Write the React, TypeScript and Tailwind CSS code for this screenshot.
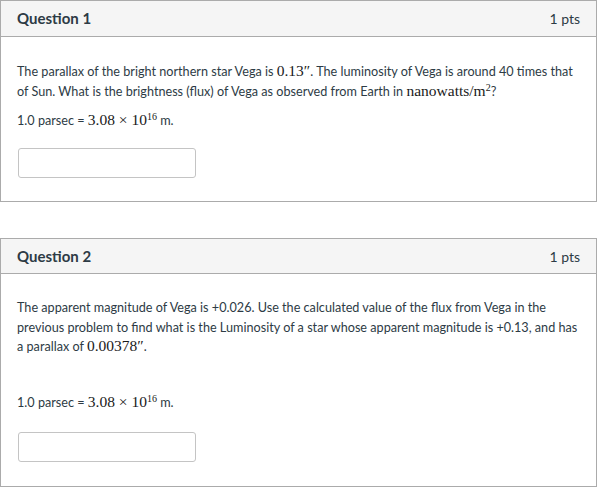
import React from "react";

const M = ({ children }: { children: React.ReactNode }) => (
  <span className="font-['Liberation_Serif',serif] text-[15.5px] leading-[0] text-[#1a1a1a]">{children}</span>
);

const Parsec = () => (
  <p className="text-[12.65px] leading-[20px] h-[20px]">
    1.0 parsec = <M>3.08 × 10<sup className="text-[10px]">16</sup></M> m.
  </p>
);

function Card({ title, headH, children, className = "" }: { title: string; headH: string; children: React.ReactNode; className?: string }) {
  return (
    <div className={`w-[597px] border border-[#ababab] bg-white ${className}`}>
      <div className={`${headH} bg-[#f5f5f5] border-b border-[#ababab] flex items-center justify-between px-4`}>
        <h2 className="text-[15px] font-bold text-[#2d3b45]">{title}</h2>
        <span className="text-[14px] text-[#2d3b45]">1 pts</span>
      </div>
      {children}
    </div>
  );
}

export default function App() {
  return (
    <div className="w-[600px] h-[488px] bg-white font-['Lato',sans-serif] text-[#2d3b45] overflow-hidden">
      <Card title="Question 1" headH="h-[36px]">
        <div className="px-4 pt-[25px] pb-[23px]">
          <p className="text-[12.65px] leading-[19.5px]">
            The parallax of the bright northern star Vega is <M>0.13″</M>. The luminosity of Vega is around 40 times that of Sun. What is the brightness (flux) of Vega as observed from Earth in{" "}
            <M>nanowatts/m<sup className="text-[10px]">2</sup></M>?
          </p>
          <div className="mt-[10px]">
            <Parsec />
          </div>
          <input className="block mt-[17px] ml-px w-[178px] h-[30px] border border-[#c4c4c4] rounded-[3px] outline-none" />
        </div>
      </Card>

      <Card title="Question 2" headH="h-[35px]" className="mt-[36px]">
        <div className="px-4 pt-[24px] pb-[24px]">
          <p className="text-[12.65px] leading-[19.5px]">
            The apparent magnitude of Vega is +0.026. Use the calculated value of the flux from Vega in the previous problem to find what is the Luminosity of a star whose apparent magnitude is +0.13, and has a parallax of <M>0.00378″</M>.
          </p>
          <div className="mt-[36px]">
            <Parsec />
          </div>
          <input className="block mt-[19px] ml-px w-[178px] h-[30px] border border-[#c4c4c4] rounded-[3px] outline-none" />
        </div>
      </Card>
    </div>
  );
}
